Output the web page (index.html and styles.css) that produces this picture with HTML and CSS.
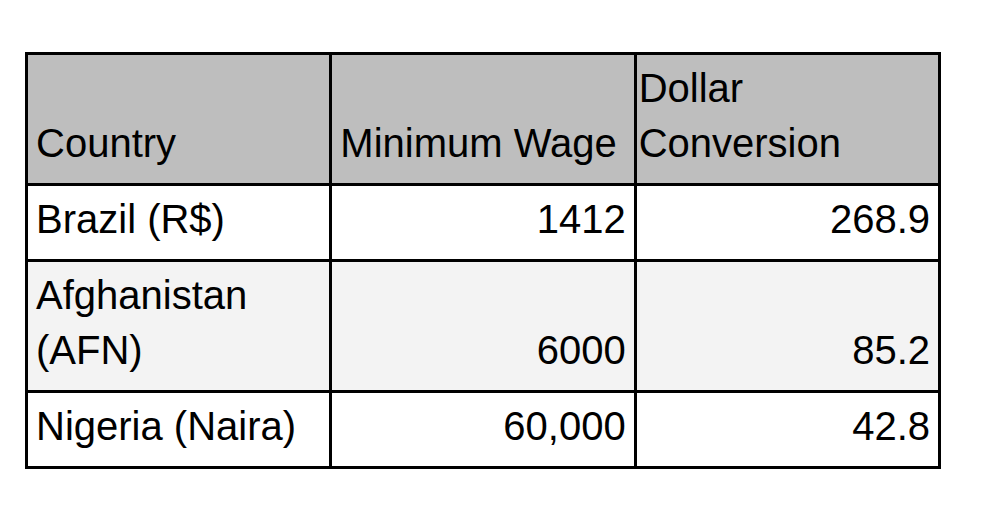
FILE: index.html
```html
<!DOCTYPE html>
<html lang="en">
<head>
<meta charset="utf-8">
<title>Minimum Wage</title>
<link rel="stylesheet" href="styles.css">
</head>
<body>
<table class="wage-table">
  <thead>
    <tr class="head-row">
      <th class="col-country">Country</th>
      <th class="col-wage">Minimum Wage</th>
      <th class="col-dollar">Dollar Conversion</th>
    </tr>
  </thead>
  <tbody>
    <tr>
      <td>Brazil (R$)</td>
      <td class="num">1412</td>
      <td class="num">268.9</td>
    </tr>
    <tr class="alt">
      <td>Afghanistan (AFN)</td>
      <td class="num">6000</td>
      <td class="num">85.2</td>
    </tr>
    <tr>
      <td>Nigeria (Naira)</td>
      <td class="num">60,000</td>
      <td class="num">42.8</td>
    </tr>
  </tbody>
</table>
</body>
</html>
```
FILE: styles.css
```css
html, body {
  margin: 0;
  padding: 0;
  background: #ffffff;
}

body {
  font-family: "Liberation Sans", Arial, sans-serif;
  color: #000000;
}

.wage-table {
  margin: 52px 0 0 25px;
  border-collapse: collapse;
  border: 3px solid #000;
  width: 916px;
  table-layout: fixed;
  font-size: 40px;
  line-height: 55px;
}

.wage-table th,
.wage-table td {
  border: 3px solid #000;
  padding: 6px 7px 12px 8px;
  vertical-align: bottom;
  text-align: left;
  font-weight: normal;
  overflow-wrap: break-word;
}

.wage-table th.col-dollar {
  padding-left: 2px;
}

.head-row th {
  background: #bebebe;
}

.wage-table .alt td {
  background: #f3f3f3;
}

.wage-table td.num {
  text-align: right;
  padding-right: 8px;
}
```
